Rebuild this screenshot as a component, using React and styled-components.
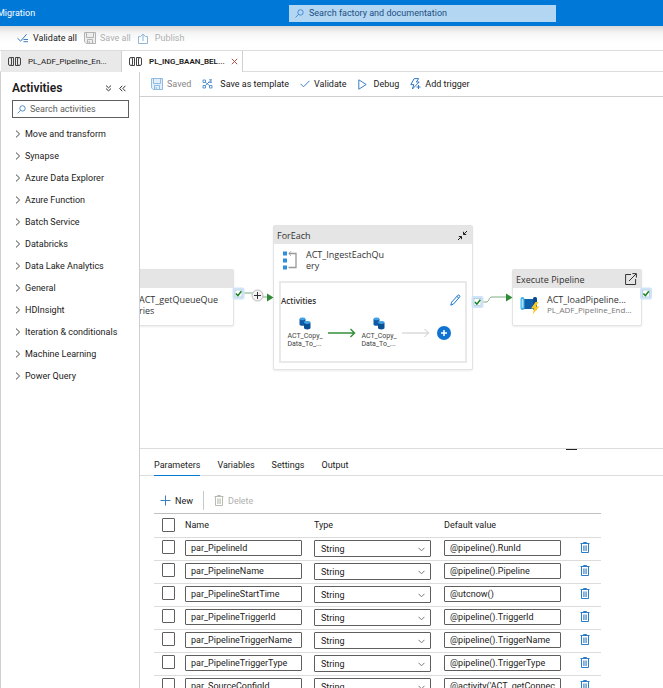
import React, { useState } from "react";
import styled, { createGlobalStyle, css } from "styled-components";

const activities = [
  "Move and transform",
  "Synapse",
  "Azure Data Explorer",
  "Azure Function",
  "Batch Service",
  "Databricks",
  "Data Lake Analytics",
  "General",
  "HDInsight",
  "Iteration & conditionals",
  "Machine Learning",
  "Power Query",
];

const parameters = [
  { name: "par_PipelineId", value: "@pipeline().RunId" },
  { name: "par_PipelineName", value: "@pipeline().Pipeline" },
  { name: "par_PipelineStartTime", value: "@utcnow()" },
  { name: "par_PipelineTriggerId", value: "@pipeline().TriggerId" },
  { name: "par_PipelineTriggerName", value: "@pipeline().TriggerName" },
  { name: "par_PipelineTriggerType", value: "@pipeline().TriggerType" },
  { name: "par_SourceConfigId", value: "@activity('ACT_getConnect" },
];

const panelTabs = ["Parameters", "Variables", "Settings", "Output"];

/* ---------- icons ---------- */

const Icon = ({ w = 12, h = 12, color = "#3a7fc4", children }) => (
  <svg
    width={w}
    height={h}
    viewBox={`0 0 ${w} ${h}`}
    fill="none"
    stroke={color}
    strokeWidth="1"
    aria-hidden="true"
  >
    {children}
  </svg>
);

const SearchIcon = ({ color }) => (
  <Icon w={9} h={9} color={color}>
    <circle cx="5.5" cy="3.4" r="2.7" strokeWidth="0.8" />
    <path d="M3.5 5.4 0.6 8.4" strokeWidth="0.8" />
  </Icon>
);

const ValidateAllIcon = () => (
  <Icon w={12} h={10}>
    <path d="M0.5 5.2 3.6 8.2 9.6 1.2M6.5 6.5h4.5M6.5 8.7h4.5" />
  </Icon>
);

const SaveIcon = ({ color, fill = "none" }) => (
  <Icon w={12} h={12} color={color}>
    <path d="M0.5 0.5h11v11H2.2L0.5 9.8z" fill={fill} />
    <path d="M2.5 0.5v5h7v-5M3.5 11.5v-4h5v4M5.2 9v2.5" />
  </Icon>
);

const PublishIcon = () => (
  <Icon w={10} h={11} color="#8fb6dc">
    <path d="M2.8 3.5H0.5v7h9v-7H7.2M5 8V1M3 3l2-2 2 2" />
  </Icon>
);

const PipelineIcon = () => (
  <Icon w={14} h={9} color="#444">
    <path d="M5.5 1.5v6M7.5 1.5v6" stroke="#c9a57c" />
    <rect x="0.5" y="0.5" width="3" height="8" rx="1.5" />
    <path d="M2.500 0.500h3v8h-3" />
    <path d="M11 0.500H7.500v8H11" />
    <rect x="9.500" y="0.500" width="3" height="8" rx="1.500" />
  </Icon>
);

const TemplateIcon = () => (
  <Icon w={11} h={10} color="#3a7fc4">
    <path d="M1 1h2.5v2.5H1zM1 6.5h2.5V9H1zM7.5 6.5H10V9H7.5z" strokeWidth="0.8" />
    <path d="M3.5 3.5l4 3M3.5 6.5l4-4M7 0.8h3M8.8 0.8v3M6 3.3h4" strokeWidth="0.8" />
  </Icon>
);

const CheckIcon = () => (
  <Icon w={10} h={8}>
    <path d="M0.5 3.8 3.5 6.8 9.5 0.8" />
  </Icon>
);

const PlayIcon = () => (
  <Icon w={9} h={11} color="#3a7fc4">
    <path d="M0.8 0.8v9.4L8.2 5.5z" />
  </Icon>
);

const TriggerIcon = () => (
  <Icon w={11} h={12} color="#2f78c4">
    <path d="M4.2 0.6h4.4L6.4 4h2.8L2.4 11l1.4-4.4H0.8z" />
    <path d="M8.5 7v4M6.5 9h4" />
  </Icon>
);

const DoubleDown = () => (
  <Icon w={7} h={7} color="#333">
    <path d="M1 0.6 3.5 2.8 6 0.6M1 3.6 3.5 5.8 6 3.6" />
  </Icon>
);

const DoubleLeft = () => (
  <Icon w={7} h={7} color="#333">
    <path d="M3.2 0.8 0.7 3.5 3.2 6.2M6.4 0.8 3.9 3.5 6.4 6.2" />
  </Icon>
);

const ChevronRight = () => (
  <Icon w={6} h={8} color="#444">
    <path d="M1 0.6 4.6 4 1 7.4" />
  </Icon>
);

const PlusIcon = () => (
  <Icon w={11} h={11}>
    <path d="M5.5 0.5v10M0.5 5.5h10" />
  </Icon>
);

const TrashIcon = ({ color, fill }) => (
  <Icon w={10} h={11} color={color}>
    <path d="M0.5 1.5h9M3.5 1.2v-0.7h3v0.7" />
    <path d="M1.5 2v8.5h7V2" />
    <path d="M3.5 3.5h3v5.5h-3z" fill={fill} stroke="none" />
    <path d="M3.5 3.5V9M5 3.5V9M6.5 3.5V9" strokeWidth="0.6" />
  </Icon>
);

const CollapseIcon = () => (
  <Icon w={11} h={11} color="#222">
    <path d="M1 10 4.3 6.7M1.8 6.500h2.700v2.700M10 1 6.700 4.300M6.500 1.800v2.700h2.700" />
  </Icon>
);

const OpenIcon = () => (
  <Icon w={12} h={12} color="#333">
    <path d="M6 1.5H0.6v10h10V6M4 8l7-7M7.4 0.6h4v4" />
  </Icon>
);

const LoopIcon = () => (
  <Icon w={15} h={19} color="#999">
    <path d="M0 0.5h4v4H0zM0 7.5h4v4H0zM0 14.5h4v4H0z" fill="#2e8fdb" stroke="none" />
    <path d="M6 2.5h7v14H5.5" strokeWidth="1.3" />
    <path d="M8 0.3 5.8 2.5 8 4.7" />
  </Icon>
);

const PencilIcon = () => (
  <Icon w={11} h={12} color="#1976d2">
    <path d="M0.8 11.2 1.6 8.2 7.9 1.3c0.9-0.9 2.6 0.6 1.8 1.6L3.5 10zM6.8 2.4 8.8 4.2" />
  </Icon>
);

const CopyDataIcon = () => (
  <Icon w={12} h={13}>
    <g stroke="none">
      <path d="M0.5 2v5.5c0 1.8 6 1.8 6 0V2z" fill="#0f5ba7" />
      <ellipse cx="3.5" cy="1.9" rx="3" ry="1.4" fill="#3fa0e6" />
      <path d="M5 5.6v5.4c0 1.9 6.5 1.9 6.5 0V5.6z" fill="#0b4f94" />
      <ellipse cx="8.2" cy="5.5" rx="3.2" ry="1.4" fill="#3f9fe0" />
    </g>
  </Icon>
);

const ExecuteIcon = () => (
  <Icon w={20} h={20}>
    <g stroke="none">
      <path d="M3.5 3h10.5v10H3.5z" fill="#0f5fa9" />
      <rect x="0.5" y="1" width="4" height="13" rx="2" fill="#41b2e8" />
      <rect x="1.6" y="3" width="1.8" height="9" rx="0.9" fill="#a5e2fa" />
      <rect x="13" y="1" width="4" height="13" rx="1.5" fill="#0b4a8c" />
      <path d="M15.5 6 11 12.500h3.200L12.500 18.500 19.500 10.500h-3.600L18.500 6z" fill="#fbc926" />
    </g>
  </Icon>
);

const StepArrow = ({ color, thick }) => (
  <Icon w={28} h={10} color={color}>
    <path d="M0 5h26.5M22.5 1l4 4-4 4" strokeWidth={thick ? 1.5 : 1} />
  </Icon>
);

/* ---------- canvas ---------- */

const StatusCheck = ({ x, y }) => (
  <g>
    <rect x={x - 5} y={y - 5} width="10" height="10" rx="1" fill="#fff" stroke="#cfe4f8" strokeWidth="2" />
    <rect x={x - 3.5} y={y - 3.5} width="7" height="7" fill="#fff" stroke="#8db4cf" strokeWidth="0.6" />
    <path d={`M${x - 2.6} ${y}l2 2.2 3.4-4.4`} stroke="#15801c" strokeWidth="1.5" fill="none" />
  </g>
);

const Connectors = () => (
  <Wires viewBox="0 0 523 351" aria-hidden="true">
    <g fill="none" stroke="#7fae80">
      <path d="M103 196h10M123 200h5" />
      <path d="M342 205h4c4 0 2-5 6-5h16" />
    </g>
    <path d="M127 196.500l6.500 4-6.500 4zM366 196.500l6.500 4-6.500 4z" fill="#2f8a35" />
    <circle cx="117.500" cy="198.500" r="5.500" fill="#f3f3f3" stroke="#bbb" />
    <path d="M117.500 195v7M114 198.500h7" stroke="#333" />
    <StatusCheck x={98.5} y={196.5} />
    <StatusCheck x={337.5} y={205} />
    <StatusCheck x={506} y={196.5} />
  </Wires>
);

const InnerStep = () => (
  <Step>
    <CopyDataIcon />
    <StepLabel>
      ACT_Copy_
      <br />
      Data_To_...
    </StepLabel>
  </Step>
);

const PipelineCanvas = () => (
  <Canvas>
    <Connectors />
    <Node $x={-36} $y={172} $w={130}>
      <NodeHead />
      <NodeBody>
        <NodeIcon />
        <NodeName>
          ACT_getQueueQue
          <br />
          ries
        </NodeName>
      </NodeBody>
    </Node>

    <Node $x={133} $y={128} $w={200}>
      <NodeHead>
        ForEach
        <PlainButton aria-label="Collapse">
          <CollapseIcon />
        </PlainButton>
      </NodeHead>
      <NodeBody $loop>
        <NodeIcon>
          <LoopIcon />
        </NodeIcon>
        <NodeName>
          ACT_IngestEachQu
          <br />
          ery
        </NodeName>
      </NodeBody>
      <InnerBox>
        <InnerHead>
          Activities
          <PlainButton aria-label="Edit activities">
            <PencilIcon />
          </PlainButton>
        </InnerHead>
        <InnerFlow>
          <InnerStep />
          <StepArrow color="#35903a" thick />
          <InnerStep />
          <StepArrow color="#c8c8c8" />
          <AddButton aria-label="Add activity">
            <Icon w={8} h={8} color="#fff">
              <path d="M4 1v6M1 4h6" strokeWidth="1.5" />
            </Icon>
          </AddButton>
        </InnerFlow>
      </InnerBox>
    </Node>

    <Node $x={372} $y={172} $w={130}>
      <NodeHead>
        Execute Pipeline
        <PlainButton aria-label="Open pipeline">
          <OpenIcon />
        </PlainButton>
      </NodeHead>
      <NodeBody>
        <NodeIcon>
          <ExecuteIcon />
        </NodeIcon>
        <NodeName>
          ACT_loadPipeline...
          <small>PL_ADF_Pipeline_End...</small>
        </NodeName>
      </NodeBody>
    </Node>
  </Canvas>
);

const ParameterTable = () => (
  <Table>
    <colgroup>
      <col width="31" />
      <col width="129" />
      <col width="130" />
      <col width="127" />
      <col width="30" />
    </colgroup>
    <thead>
      <tr>
        <th>
          <Checkbox type="checkbox" aria-label="Select all" />
        </th>
        <th>Name</th>
        <th>Type</th>
        <th>Default value</th>
        <th />
      </tr>
    </thead>
    <tbody>
      {parameters.map((p) => (
        <tr key={p.name}>
          <td>
            <Checkbox type="checkbox" aria-label={`Select ${p.name}`} />
          </td>
          <td>
            <Field defaultValue={p.name} aria-label="Name" />
          </td>
          <td>
            <SelectBox>
              <Select defaultValue="String" aria-label="Type">
                <option>String</option>
                <option>Int</option>
                <option>Bool</option>
              </Select>
              <Icon w={7} h={5} color="#777">
                <path d="M0.5 0.8 3.5 3.8 6.5 0.8" />
              </Icon>
            </SelectBox>
          </td>
          <td>
            <Field defaultValue={p.value} aria-label="Default value" />
          </td>
          <td>
            <PlainButton aria-label={`Delete ${p.name}`}>
              <TrashIcon color="#2b7cc9" fill="#c5dcf2" />
            </PlainButton>
          </td>
        </tr>
      ))}
    </tbody>
  </Table>
);

const App = () => {
  const [tab, setTab] = useState("Parameters");

  return (
    <Page>
      <GlobalStyle />
      <Header>
        <Crumb>Migration</Crumb>
        <GlobalSearch>
          <SearchIcon color="#2f78d0" />
          <input placeholder="Search factory and documentation" aria-label="Search factory and documentation" />
        </GlobalSearch>
      </Header>

      <FactoryBar>
        <ToolButton>
          <ValidateAllIcon />
          Validate all
        </ToolButton>
        <ToolButton disabled>
          <SaveIcon color="#b3b3b3" fill="#eee" />
          Save all
        </ToolButton>
        <ToolButton disabled $wide>
          <PublishIcon />
          Publish
        </ToolButton>
      </FactoryBar>

      <FileTabs>
        <FileTab>
          <PipelineIcon />
          <span>PL_ADF_Pipeline_En...</span>
        </FileTab>
        <FileTab $active>
          <PipelineIcon />
          <span>PL_ING_BAAN_BEL...</span>
          <PlainButton aria-label="Close tab">
            <Icon w={7} h={7} color="#b0504f">
              <path d="M0.8 0.8l5.400 5.400M6.200 0.800l-5.400 5.400" />
            </Icon>
          </PlainButton>
        </FileTab>
      </FileTabs>

      <Workspace>
        <Sidebar>
          <SidebarHead>
            <h2>Activities</h2>
            <PlainButton aria-label="Expand all">
              <DoubleDown />
            </PlainButton>
            <PlainButton aria-label="Hide activities">
              <DoubleLeft />
            </PlainButton>
          </SidebarHead>
          <ActivitySearch>
            <SearchIcon color="#2f6fb5" />
            <input placeholder="Search activities" aria-label="Search activities" />
          </ActivitySearch>
          <ActivityList>
            {activities.map((name) => (
              <li key={name}>
                <ActivityButton>
                  <ChevronRight />
                  {name}
                </ActivityButton>
              </li>
            ))}
          </ActivityList>
        </Sidebar>

        <Main>
          <PipelineBar>
            <ToolButton disabled $dim>
              <SaveIcon color="#8fbbe3" fill="#e3f0fb" />
              Saved
            </ToolButton>
            <ToolButton $wide>
              <TemplateIcon />
              Save as template
            </ToolButton>
            <ToolButton>
              <CheckIcon />
              Validate
            </ToolButton>
            <ToolButton $wide>
              <PlayIcon />
              Debug
            </ToolButton>
            <ToolButton>
              <TriggerIcon />
              Add trigger
            </ToolButton>
          </PipelineBar>

          <PipelineCanvas />

          <Panel>
            <Grip />
            <PanelTabs role="tablist">
              {panelTabs.map((name) => (
                <PanelTab
                  key={name}
                  role="tab"
                  aria-selected={tab === name}
                  $active={tab === name}
                  onClick={() => setTab(name)}
                >
                  {name}
                </PanelTab>
              ))}
            </PanelTabs>
            <PanelBar>
              <ToolButton>
                <PlusIcon />
                New
              </ToolButton>
              <Divider />
              <ToolButton disabled>
                <TrashIcon color="#b5bdb0" fill="#e9ece4" />
                Delete
              </ToolButton>
            </PanelBar>
            <ParameterTable />
          </Panel>
        </Main>
      </Workspace>
    </Page>
  );
};

/* ---------- styles ---------- */

const GlobalStyle = createGlobalStyle`
  * {
    box-sizing: border-box;
  }
  body {
    margin: 0;
    background: #fff;
  }
  body, button, input, select {
    font-family: Roboto, "Open Sans", sans-serif;
    font-size: 9px;
    color: #1b1a19;
  }
  svg {
    display: block;
    flex: none;
  }
`;

const Page = styled.div`
  display: flex;
  flex-direction: column;
  height: 100vh;
  overflow: hidden;
`;

const Header = styled.header`
  display: flex;
  align-items: center;
  flex: none;
  height: 26px;
  background: #0078d7;
`;

const Crumb = styled.span`
  flex: 0 0 289px;
  margin-left: -3px;
  margin-right: 3px;
  color: #fff;
`;

const searchBox = css`
  display: flex;
  align-items: center;
  input {
    flex: 1;
    min-width: 0;
    padding: 0;
    border: 0;
    outline: 0;
    background: none;
  }
`;

const GlobalSearch = styled.label`
  ${searchBox}
  flex: 0 1 267px;
  height: 17px;
  padding: 0 6px;
  gap: 5px;
  background: #b3d6f3;
  input::placeholder {
    color: #1c4f80;
    opacity: 1;
  }
`;

const FactoryBar = styled.div`
  display: flex;
  align-items: center;
  gap: 7px;
  flex: none;
  height: 25px;
  padding: 0 17px;
  border-bottom: 1px solid #dcdcdc;
  background: linear-gradient(#d9d9d9, #f5f5f5 7px, #fff 16px);
`;

const PlainButton = styled.button`
  display: flex;
  padding: 0;
  border: 0;
  background: none;
  cursor: pointer;
`;

const ToolButton = styled(PlainButton)`
  align-items: center;
  gap: ${(p) => (p.$wide ? 7 : 4)}px;
  white-space: nowrap;
  &:disabled {
    color: ${(p) => (p.$dim ? "#868686" : "#b0b0b0")};
    cursor: default;
  }
`;

const FileTabs = styled.div`
  display: flex;
  flex: none;
  height: 21px;
  padding-left: 1px;
  border-bottom: 1px solid #dcdcdc;
`;

const FileTab = styled.div`
  display: flex;
  align-items: center;
  gap: 6px;
  width: 121px;
  height: 21px;
  padding: 0 7px;
  border-right: 1px solid #d0d0d0;
  background: ${(p) => (p.$active ? "#fff" : "#e9e9e9")};
  font-size: 8px;
  font-weight: ${(p) => (p.$active ? 600 : 400)};
  span {
    flex: 1;
    white-space: nowrap;
  }
`;

const Workspace = styled.div`
  display: flex;
  flex: 1;
  min-height: 0;
`;

const Sidebar = styled.aside`
  flex: 0 0 140px;
  min-width: 0;
  padding: 7px 10px 0 11px;
  border: solid #cfcfcf;
  border-width: 0 1px;
`;

const SidebarHead = styled.div`
  display: flex;
  align-items: center;
  gap: 7px;
  height: 18px;
  padding-right: 3px;
  h2 {
    flex: 1;
    margin: 0;
    font-size: 12px;
    font-weight: 600;
  }
`;

const ActivitySearch = styled.label`
  ${searchBox}
  height: 18px;
  margin: 3px 0 5px;
  padding: 0 4px;
  gap: 4px;
  border: 1px solid #605e5c;
  input::placeholder {
    color: #605e5c;
    opacity: 1;
  }
`;

const ActivityList = styled.ul`
  margin: 0;
  padding: 0;
  list-style: none;
`;

const ActivityButton = styled(PlainButton)`
  align-items: center;
  gap: 4px;
  width: 100%;
  height: 22px;
  padding-left: 3px;
  white-space: nowrap;
`;

const Main = styled.main`
  display: flex;
  flex-direction: column;
  flex: 1;
  min-width: 0;
`;

const PipelineBar = styled.div`
  display: flex;
  align-items: center;
  gap: 11px;
  flex: none;
  height: 25px;
  padding: 0 11px;
  border-bottom: 1px solid #cfcfcf;
`;

const Canvas = styled.div`
  position: relative;
  flex: 1;
  overflow: hidden;
  font-family: "Open Sans", "Noto Sans", sans-serif;
`;

const Wires = styled.svg`
  position: absolute;
  z-index: 1;
  top: 0;
  left: 0;
  width: 523px;
  height: 351px;
  pointer-events: none;
`;

const Node = styled.div`
  position: absolute;
  left: ${(p) => p.$x}px;
  top: ${(p) => p.$y}px;
  width: ${(p) => p.$w}px;
  border: 1px solid #e3e3e3;
  border-radius: 2px;
  background: #fff;
  box-shadow: 0 1px 2px rgba(0, 0, 0, 0.08);
`;

const NodeHead = styled.div`
  display: flex;
  align-items: center;
  justify-content: space-between;
  height: 18px;
  padding: 0 4px 0 3px;
  background: #e5e5e5;
  color: #333;
`;

const NodeBody = styled.div`
  display: flex;
  height: 37px;
  padding: ${(p) => (p.$loop ? "5px 0 0 9px" : "6px 0 0 7px")};
  gap: ${(p) => (p.$loop ? 3 : 7)}px;
`;

const NodeIcon = styled.span`
  flex: 0 0 20px;
  padding-top: 2px;
`;

const NodeName = styled.div`
  font-size: 9px;
  line-height: 11px;
  color: #333;
  white-space: nowrap;
  small {
    display: block;
    font-size: 8px;
    line-height: 10px;
    color: #777;
  }
`;

const InnerBox = styled.div`
  height: 82px;
  margin: 0 5px 6px;
  border: 2px solid #e9e9e9;
`;

const InnerHead = styled.div`
  display: flex;
  align-items: center;
  justify-content: space-between;
  height: 34px;
  padding: 0 4px 0 0;
  font-size: 8px;
  font-weight: 600;
  color: #333;
`;

const InnerFlow = styled.div`
  display: flex;
  align-items: center;
  gap: 7px;
  padding-left: 8px;
`;

const Step = styled.div`
  display: flex;
  flex-direction: column;
  align-items: center;
  width: 32px;
`;

const StepLabel = styled.span`
  margin-top: 2px;
  font-family: Roboto, sans-serif;
  font-size: 7px;
  line-height: 8px;
  color: #444;
  white-space: nowrap;
`;

const AddButton = styled(PlainButton)`
  align-items: center;
  justify-content: center;
  width: 14px;
  height: 14px;
  border-radius: 50%;
  background: #0f74d1;
`;

const Panel = styled.section`
  position: relative;
  flex: 0 0 240px;
  border-top: 1px solid #dcdcdc;
  overflow: hidden;
`;

const Grip = styled.span`
  position: absolute;
  top: 0;
  right: 86px;
  width: 11px;
  height: 1px;
  background: #222;
`;

const PanelTabs = styled.div`
  display: flex;
  gap: 17px;
  height: 27px;
  padding: 0 14px;
  border-bottom: 1px solid #dcdcdc;
`;

const PanelTab = styled(PlainButton)`
  align-items: center;
  height: 27px;
  padding-top: 6px;
  border-bottom: 1px solid ${(p) => (p.$active ? "#0078d4" : "transparent")};
`;

const PanelBar = styled.div`
  display: flex;
  align-items: center;
  height: 37px;
  padding: 12px 20px 0;
  gap: 10px;
`;

const Divider = styled.span`
  width: 1px;
  height: 19px;
  background: #c8c8c8;
`;

const Table = styled.table`
  width: 447px;
  margin-left: 14px;
  table-layout: fixed;
  border-collapse: collapse;
  border-top: 1px solid #c0c0c0;
  th,
  td {
    height: 23px;
    padding: 2px 0 0;
    border-bottom: 1px solid #dcdcdc;
    text-align: left;
    font-weight: 400;
    vertical-align: top;
  }
  th {
    height: 24px;
    padding: 0 0 2px;
    vertical-align: middle;
  }
  td:last-child button {
    margin: 2px 0 0 9px;
  }
`;

const Checkbox = styled.input`
  appearance: none;
  display: block;
  width: 13px;
  height: 14px;
  margin: 0 0 0 8px;
  border: 1px solid #605e5c;
  border-radius: 1px;
  background: #fff;
  &:checked {
    background: #0078d4;
  }
`;

const field = css`
  display: block;
  width: 117px;
  border: 1px solid #605e5c;
  border-radius: 1px;
  background: #fff;
`;

const Field = styled.input`
  ${field}
  height: 16px;
  padding: 0 5px;
`;

const SelectBox = styled.div`
  position: relative;
  width: 117px;
  svg {
    position: absolute;
    top: 7px;
    right: 6px;
    pointer-events: none;
  }
`;

const Select = styled.select`
  ${field}
  appearance: none;
  height: 17px;
  padding: 0 6px;
`;

export default App;
